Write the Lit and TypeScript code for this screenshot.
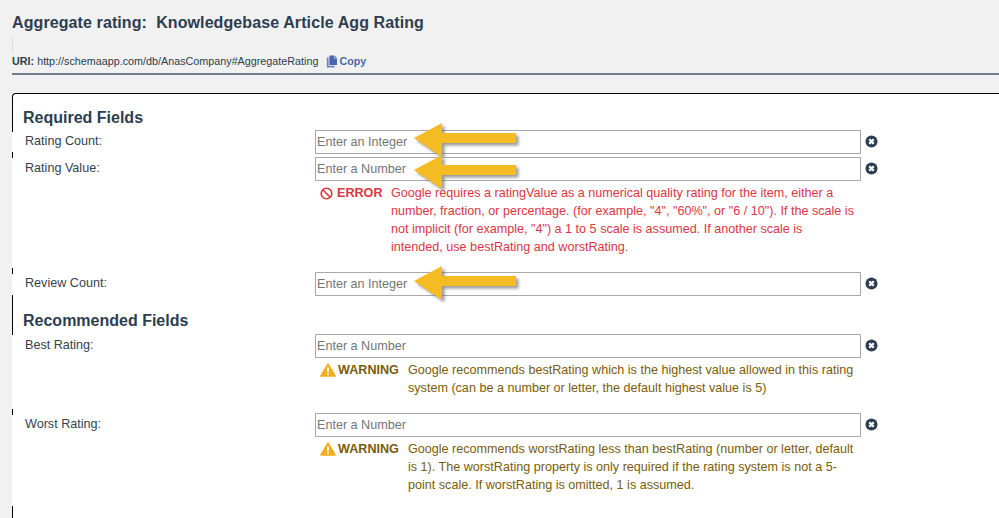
import { LitElement, html, css, svg } from "lit";
import { customElement } from "lit/decorators.js";

const clearIcon = svg`<svg class="clear" viewBox="0 0 14 14" width="13" height="13"><circle cx="7" cy="7" r="6.5" fill="#2c3e50"/><path d="M4.6 4.6l4.8 4.8M9.4 4.6l-4.8 4.8" stroke="#fff" stroke-width="2.4" fill="none"/></svg>`;
const banIcon = svg`<svg viewBox="0 0 13 13" width="13" height="13"><circle cx="6.5" cy="6.5" r="5.3" fill="none" stroke="#d9363e" stroke-width="1.6"/><path d="M2.8 2.8l7.4 7.4" stroke="#d9363e" stroke-width="1.6"/></svg>`;
const warnIcon = svg`<svg viewBox="0 0 16 14" width="16" height="14"><path d="M8 1.2L15 13H1z" fill="#f0ad1e" stroke="#f0ad1e" stroke-width="1.6" stroke-linejoin="round"/><path d="M8 4.6v4.6M8 10.2v1.7" stroke="#fff" stroke-width="1.7"/></svg>`;
const copyIcon = svg`<svg viewBox="0 0 12 13" width="12" height="13"><path d="M3.4 0.5h4.6v3h3v6.5h-7.6z" fill="#4a64ad"/><path d="M8.6 0.5l2.4 2.4h-2.4z" fill="#4a64ad"/><path d="M2.6 2.6v8.2h6v1.7h-7.8v-9.9z" fill="#6f84bf"/></svg>`;
const arrow = svg`<svg viewBox="0 0 110 38" width="110" height="38"><defs><filter id="s" x="-10%" y="-20%" width="125%" height="150%"><feGaussianBlur stdDeviation="1.4"/></filter></defs><path d="M2 16L30 1v10h74v10H30v14z" fill="#555" opacity=".6" filter="url(#s)" transform="translate(1.5 2.5)"/><path d="M1 16L29 1v10h74v10H29v14z" fill="#f5bb22"/></svg>`;

@customElement("app-root")
export class AppRoot extends LitElement {
  static styles = css`
    :host { display: block; height: 518px; overflow: hidden; background: #f1f1f1; font-family: "Liberation Sans", Arial, sans-serif; color: #2c3e50; }
    .head { padding: 14px 0 0 12px; }
    h1 { margin: 0; font-size: 16px; line-height: 18px; font-weight: bold; white-space: pre; color: #2c3e50; letter-spacing: 0.1px; }
    .tick { width: 1px; height: 17px; margin-top: 4px; background: #dcdcdc; }
    .uri { display: flex; align-items: center; height: 16px; margin-top: 0; font-size: 10.77px; color: #2c3e50; }
    .uri b { margin-right: 3px; }
    .copy { display: inline-flex; align-items: center; gap: 1px; margin-left: 8px; color: #4a6aa8; font-weight: bold; }
    .rule { height: 2px; margin: 4px 0 0 12px; background: #708090; }
    .card { margin: 18px 0 0 12px; height: 500px; background: #fff; border-top: 1px solid #000; border-left: 1px solid #000; border-top-left-radius: 4px; }
    h2 { margin: 0; padding-left: 10px; font-size: 16px; font-weight: bold; color: #2c3e50; }
    h2.first { height: 38px; padding-top: 14px; line-height: 19px; box-sizing: border-box; }
    h2.second { height: 40px; padding-top: 16px; line-height: 19px; box-sizing: border-box; }
    .row { display: grid; grid-template-columns: 290px 1fr; margin-left: -1px; padding-left: 13px; background: #fff; }
    .row + .row { margin-top: 6px; }
    label { font-size: 12.6px; line-height: 18px; color: #333f50; }
    .row.low label { padding-top: 1px; }
    .field { display: flex; flex-direction: column; min-width: 0; }
    .line { position: relative; display: flex; align-items: center; gap: 4px; margin: -2px 0; }
    .line.up1 { margin-top: -1px; }
    .line.down1 { margin-bottom: -1px; }
    .input { box-sizing: border-box; width: 546px; height: 24px; padding: 0 1px; border: 1px solid #a9a9a9; background: #fff; font-size: 12.6px; line-height: 22px; color: #757575; }
    .clear { flex: none; margin-bottom: 2px; }
    .arrow { position: absolute; left: 98px; line-height: 0; }
    .a1 { top: -8px; }
    .a2 { top: -3px; }
    .a3 { top: -7px; }
    .msg { display: flex; width: 536px; margin: 5px 0 12px 5px; font-size: 12.6px; line-height: 18px; }
    .tag { flex: none; display: flex; align-items: center; height: 18px; font-weight: bold; }
    .err { color: #dc3545; }
    .err .tag { width: 71px; gap: 4px; }
    .warn { color: #7a5c0a; }
    .warn .tag { width: 88px; gap: 2px; }
  `;

  private msg(kind: string, icon: unknown, tag: string, text: string) {
    return html`<div class="msg ${kind}"><span class="tag">${icon}${tag}</span><span>${text}</span></div>`;
  }

  render() {
    return html`
      <div class="head">
        <h1>Aggregate rating:  Knowledgebase Article Agg Rating</h1>
        <div class="tick"></div>
        <div class="uri"><b>URI:</b> http://schemaapp.com/db/AnasCompany#AggregateRating
          <span class="copy">${copyIcon}Copy</span></div>
      </div>
      <div class="rule"></div>
      <div class="card">
        <h2 class="first">Required Fields</h2>
        <div class="row">
          <label>Rating Count:</label>
          <div class="field"><div class="line"><div class="input">Enter an Integer</div>${clearIcon}<span class="arrow a1">${arrow}</span></div></div>
        </div>
        <div class="row low">
          <label>Rating Value:</label>
          <div class="field"><div class="line up1"><div class="input">Enter a Number</div>${clearIcon}<span class="arrow a2">${arrow}</span></div>
          ${this.msg("err", banIcon, "ERROR", `Google requires a ratingValue as a numerical quality rating for the item, either a number, fraction, or percentage. (for example, "4", "60%", or "6 / 10"). If the scale is not implicit (for example, "4") a 1 to 5 scale is assumed. If another scale is intended, use bestRating and worstRating.`)}</div>
        </div>
        <div class="row">
          <label>Review Count:</label>
          <div class="field"><div class="line down1"><div class="input">Enter an Integer</div>${clearIcon}<span class="arrow a3">${arrow}</span></div></div>
        </div>
        <h2 class="second">Recommended Fields</h2>
        <div class="row low">
          <label>Best Rating:</label>
          <div class="field"><div class="line up1"><div class="input">Enter a Number</div>${clearIcon}</div>
          ${this.msg("warn", warnIcon, "WARNING", "Google recommends bestRating which is the highest value allowed in this rating system (can be a number or letter, the default highest value is 5)")}</div>
        </div>
        <div class="row">
          <label>Worst Rating:</label>
          <div class="field"><div class="line"><div class="input">Enter a Number</div>${clearIcon}</div>
          ${this.msg("warn", warnIcon, "WARNING", "Google recommends worstRating less than bestRating (number or letter, default is 1). The worstRating property is only required if the rating system is not a 5-point scale. If worstRating is omitted, 1 is assumed.")}</div>
        </div>
      </div>
    `;
  }
}
